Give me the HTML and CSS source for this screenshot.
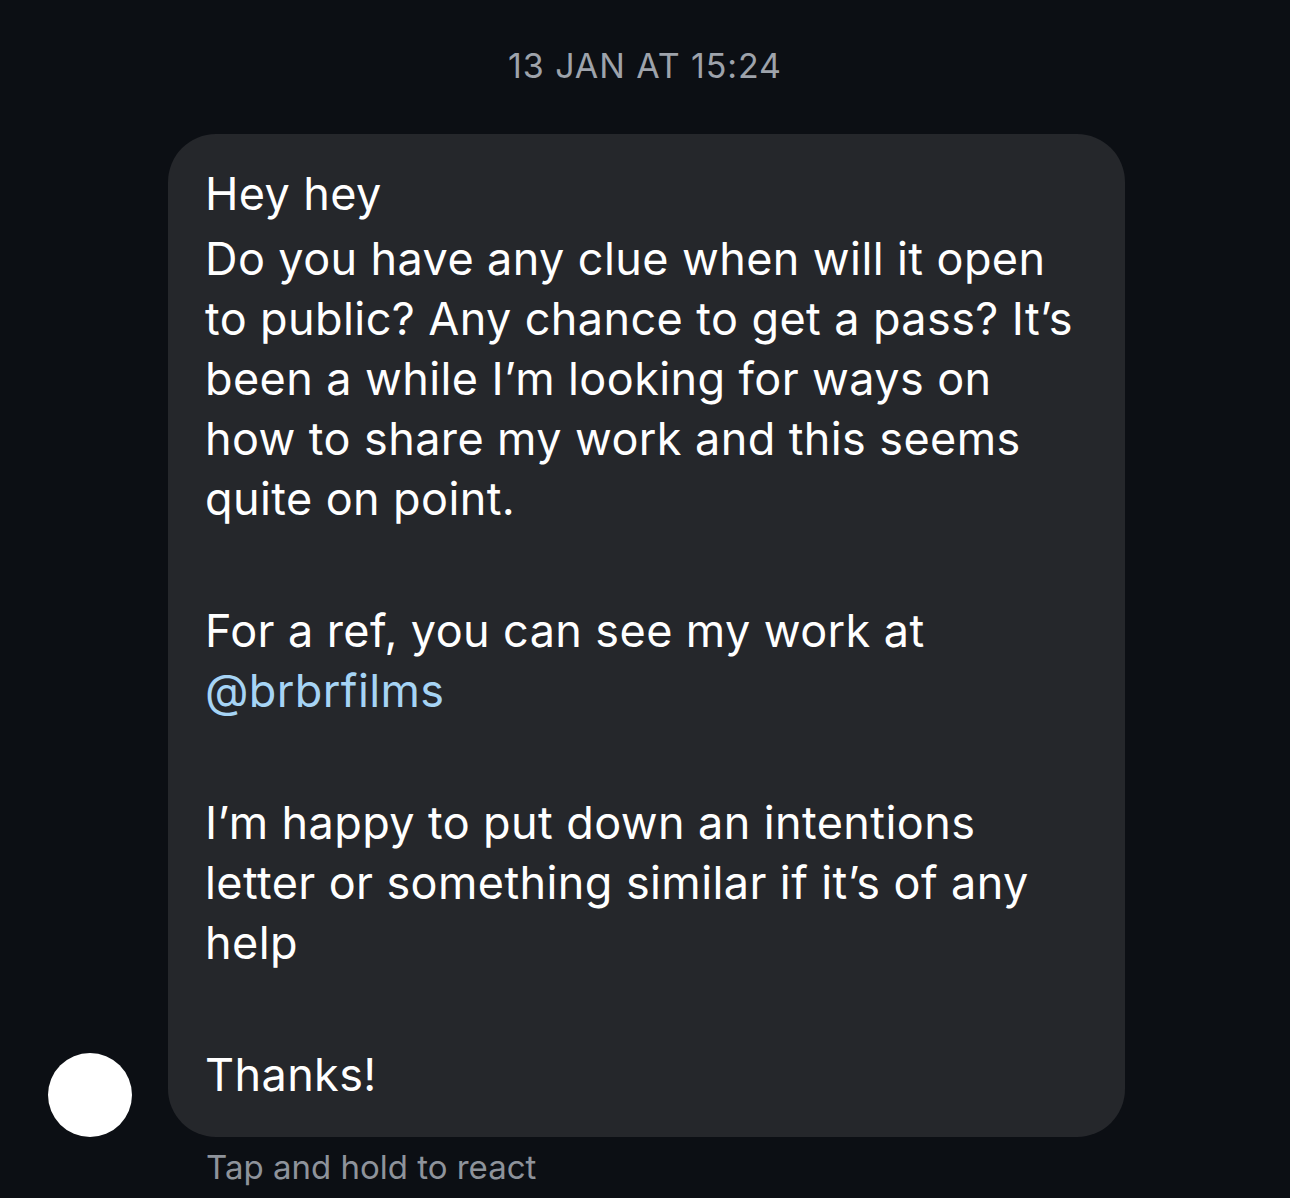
FILE: index.html
```html
<!DOCTYPE html>
<html>
<head>
<meta charset="utf-8">
<link rel="stylesheet" href="styles.css">
</head>
<body>
<div class="thread">
  <div class="time">13 JAN AT 15:24</div>
  <div class="row">
    <div class="avatar"></div>
    <div class="bubble">
      <p class="para first">Hey hey</p>
      <p class="para">Do you have any clue when will it open<br>to public? Any chance to get a pass? It’s<br>been a while I’m looking for ways on<br>how to share my work and this seems<br>quite on point.</p>
      <p class="para">For a ref, you can see my work at<br><span class="mention">@brbrfilms</span></p>
      <p class="para">I’m happy to put down an intentions<br>letter or something similar if it’s of any<br>help</p>
      <p class="para">Thanks!</p>
    </div>
  </div>
  <div class="hint">Tap and hold to react</div>
</div>
</body>
</html>
```

FILE: styles.css
```css
html, body {
  margin: 0;
  padding: 0;
  background: #0c0f14;
}
body {
  width: 1290px;
  height: 1198px;
  overflow: hidden;
  font-family: Inter, "Noto Sans", sans-serif;
}
.thread {
  display: flex;
  flex-direction: column;
}
.time {
  margin-top: 46px;
  text-align: center;
  color: #9ea3ab;
  font-size: 34px;
  line-height: 40px;
  letter-spacing: 0.9px;
}
.row {
  display: flex;
  align-items: flex-end;
  margin-top: 48px;
  padding-left: 48px;
}
.avatar {
  width: 84px;
  height: 84px;
  border-radius: 50%;
  background: #ffffff;
  flex: none;
}
.bubble {
  margin-left: 36px;
  width: 957px;
  box-sizing: border-box;
  background: #25272b;
  border-radius: 48px;
  padding: 30px 38px 32px 37px;
  display: flex;
  flex-direction: column;
  gap: 72px;
}
.para {
  margin: 0;
  color: #ffffff;
  font-size: 45px;
  line-height: 60px;
  letter-spacing: 0.4px;
  white-space: nowrap;
}
.para.first {
  margin-bottom: -67px;
}
.mention {
  color: #a6d4f5;
}
.hint {
  margin-top: 10px;
  padding-left: 206px;
  color: #8e939b;
  font-size: 33px;
  line-height: 40px;
}
```
